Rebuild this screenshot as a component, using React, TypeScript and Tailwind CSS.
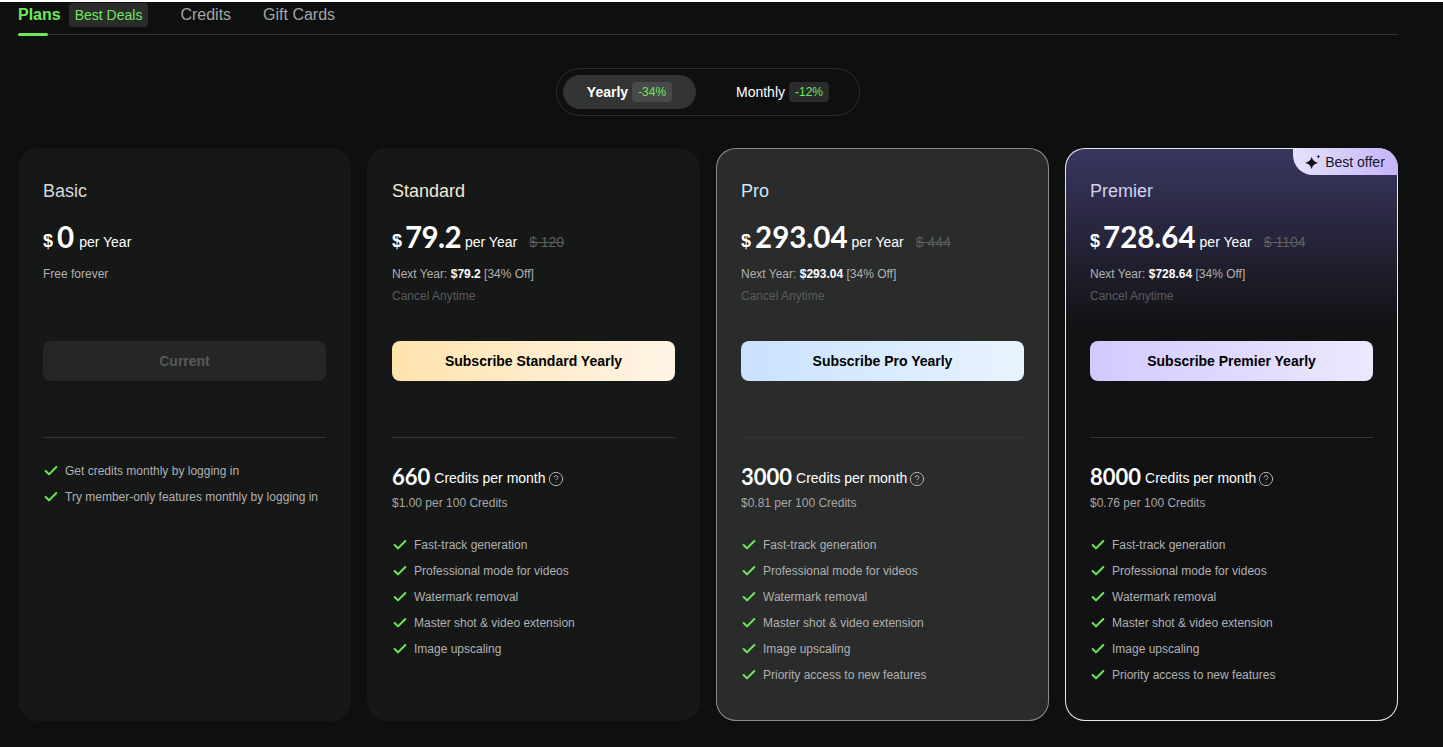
import { Check, CircleHelp } from 'lucide-react'

const baseFeatures = [
  'Fast-track generation',
  'Professional mode for videos',
  'Watermark removal',
  'Master shot & video extension',
  'Image upscaling',
]

const plans = [
  {
    name: 'Standard',
    price: '79.2',
    priceClass: 'ml-[3px] tracking-[-0.6px]',
    old: '$ 120',
    credits: '660',
    rate: '$1.00',
    button: 'Subscribe Standard Yearly',
    buttonClass: 'bg-gradient-to-r from-[#ffe3ad] to-[#fff4e6]',
    cardClass: 'bg-[#161717]',
    titleClass: 'text-[#f3e8d6]',
    features: baseFeatures,
  },
  {
    name: 'Pro',
    price: '293.04',
    priceClass: 'ml-[4px]',
    old: '$ 444',
    credits: '3000',
    rate: '$0.81',
    button: 'Subscribe Pro Yearly',
    buttonClass: 'bg-gradient-to-r from-[#c9e2ff] to-[#e8f3ff]',
    cardClass: 'bg-[#2a2b2b] ring-1 ring-inset ring-[#8a8b8b]',
    titleClass: 'text-[#d6e6f7]',
    features: [...baseFeatures, 'Priority access to new features'],
  },
  {
    name: 'Premier',
    price: '728.64',
    priceClass: 'ml-[3px]',
    old: '$ 1104',
    credits: '8000',
    rate: '$0.76',
    button: 'Subscribe Premier Yearly',
    buttonClass: 'bg-gradient-to-r from-[#d2caff] to-[#ece8fd]',
    cardClass: 'bg-[linear-gradient(180deg,#3a3760_0%,#121215_31%,#121215_100%)] ring-1 ring-inset ring-[#e8e8ea]',
    titleClass: 'text-[#d5d2ee]',
    features: [...baseFeatures, 'Priority access to new features'],
    best: true,
  },
]

function Feature({ text }: { text: string }) {
  return (
    <li className="flex h-[26px] items-center gap-[6px] text-xs text-[#b0b1b1]">
      <Check className="h-4 w-4 text-[#6ee85a]" strokeWidth={3} />
      {text}
    </li>
  )
}

function Sparkle() {
  return (
    <svg viewBox="0 0 16 16" className="h-[18px] w-[18px] text-[#0d0d14]" fill="currentColor">
      <path d="M6.8 3.4 C7.6 6.6 9.2 8 12.8 8.9 C9.2 9.7 7.6 11.1 6.8 14.4 C6 11.1 4.4 9.7 0.8 8.9 C4.4 8 6 6.6 6.8 3.4Z" />
      <path d="M12.8 1.4 C13 2.5 13.5 3 14.6 3.2 C13.5 3.4 13 3.9 12.8 5 C12.6 3.9 12.1 3.4 11 3.2 C12.1 3 12.6 2.5 12.8 1.4Z" />
    </svg>
  )
}

function Price({ value, priceClass, suffix }: { value: string; priceClass: string; suffix?: string }) {
  return (
    <div className="mt-[16px] flex h-[38px] items-end text-white">
      <span className="mb-[3px] text-lg leading-[24px] font-bold">$</span>
      <span className={`font-['Lato',sans-serif] text-[29.5px] leading-[38px] font-bold ${priceClass}`}>{value}</span>
      <span className="mb-[4px] ml-[4px] text-sm leading-[20px]">per Year</span>
      {suffix && <span className="mb-[4px] ml-[12px] text-sm leading-[20px] text-[#5e5f5f] line-through">{suffix}</span>}
    </div>
  )
}

function BasicCard() {
  return (
    <div className="h-[573px] w-[333px] rounded-[20px] bg-[#161717] px-[25px] pt-[32px]">
      <h2 className="text-lg leading-[22px] text-[#d8d9d9]">Basic</h2>
      <Price value="0" priceClass="ml-[4px] mr-[1px]" />
      <p className="mt-[10px] text-xs leading-[16px] text-[#b0b1b1]">Free forever</p>
      <button className="mt-[59px] h-10 w-full rounded-lg bg-[#252626] text-sm font-bold text-[#58595a]">Current</button>
      <div className="mt-[56px] border-t border-[#333434]" />
      <ul className="mt-5">
        <Feature text="Get credits monthly by logging in" />
        <Feature text="Try member-only features monthly by logging in" />
      </ul>
    </div>
  )
}

function PlanCard({ plan }: { plan: (typeof plans)[number] }) {
  return (
    <div className={`relative h-[573px] w-[333px] overflow-hidden rounded-[20px] px-[25px] pt-[32px] ${plan.cardClass}`}>
      {plan.best && (
        <div className="absolute top-0 right-0 flex h-[27px] w-[105px] items-center justify-center gap-[3px] rounded-bl-[20px] bg-gradient-to-r from-[#e5e2fb] to-[#c5b3fa] pr-[2px] text-sm text-[#17171f]">
          <Sparkle />
          Best offer
        </div>
      )}
      <h2 className={`text-lg leading-[22px] ${plan.titleClass}`}>{plan.name}</h2>
      <Price value={plan.price} priceClass={plan.priceClass} suffix={plan.old} />
      <p className="mt-[10px] text-xs leading-[16px] text-[#b0b1b1]">
        Next Year: <span className="font-bold text-white">${plan.price}</span> [34% Off]
      </p>
      <p className="mt-[6px] text-xs leading-[16px] text-[#5a5b5b]">Cancel Anytime</p>
      <button className={`mt-[37px] h-10 w-full rounded-lg text-sm font-bold text-black ${plan.buttonClass}`}>{plan.button}</button>
      <div className="mt-[56px] border-t border-[#333434]" />
      <div className="mt-[24px] flex h-[30px] items-center text-white">
        <span className="-mt-[2px] font-['Lato',sans-serif] text-[22px] font-bold">{plan.credits}</span>
        <span className="mt-[2px] ml-[4px] text-sm">Credits per month</span>
        <CircleHelp className="mt-[3px] ml-[2px] h-4 w-4 text-[#b0b1b1]" strokeWidth={1.5} />
      </div>
      <p className="mt-[3px] text-xs leading-[16px] text-[#a5a6a6]">{plan.rate} per 100 Credits</p>
      <ul className="mt-[21px]">
        {plan.features.map((f) => (
          <Feature key={f} text={f} />
        ))}
      </ul>
    </div>
  )
}

export default function App() {
  return (
    <div className="h-[747px] w-[1443px] overflow-hidden border-t-2 border-t-white bg-[#0e0f0f] px-[18px] font-['Liberation_Sans',Arial,sans-serif]">
      <div className="w-[1380px]">
        <div className="flex h-[33px] items-start border-b border-[#333434]">
          <div className="relative h-full">
            <span className="text-base leading-[26px] font-bold text-[#6ee85a]">Plans</span>
            <div className="absolute -bottom-[2px] left-0 h-[3px] w-[30px] rounded-full bg-[#6ee85a]" />
          </div>
          <span className="mt-[1px] ml-[8px] flex h-[24px] items-center rounded bg-[#2a2b2b] px-[6px] text-sm text-[#6ee85a]">Best Deals</span>
          <span className="ml-[32px] text-base leading-[26px] text-[#a5a6a6]">Credits</span>
          <span className="ml-[32px] text-base leading-[26px] text-[#a5a6a6]">Gift Cards</span>
        </div>

        <div className="mt-[33px] flex justify-center">
          <div className="flex h-12 w-[304px] items-center rounded-full border border-[#2c2d2d] px-[6px]">
            <div className="flex h-[34px] w-[133px] items-center justify-center gap-[4px] rounded-full bg-[#333434] text-sm font-bold text-white">
              Yearly
              <span className="rounded bg-[#484949] px-[6px] py-[2px] text-xs font-normal text-[#6ee85a]">-34%</span>
            </div>
            <div className="flex h-[34px] flex-1 items-center justify-center gap-[4px] pl-[16px] text-sm text-white">
              Monthly
              <span className="rounded bg-[#2a2b2b] px-[6px] py-[2px] text-xs text-[#6ee85a]">-12%</span>
            </div>
          </div>
        </div>

        <div className="mt-[32px] flex gap-4">
          <BasicCard />
          {plans.map((p) => (
            <PlanCard key={p.name} plan={p} />
          ))}
        </div>
      </div>
    </div>
  )
}
